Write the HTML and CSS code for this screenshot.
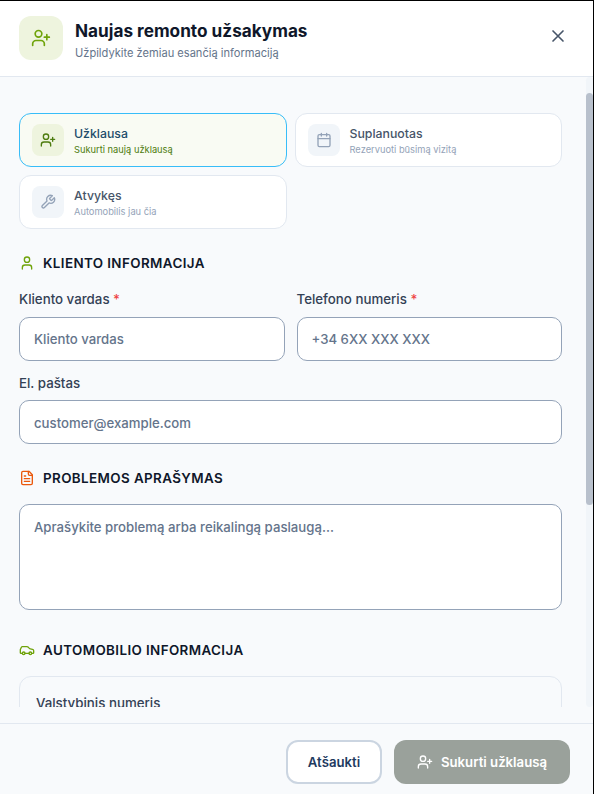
FILE: index.html
```html
<!DOCTYPE html>
<html lang="lt">
  <head>
    <meta charset="UTF-8" />
    <meta name="viewport" content="width=device-width, initial-scale=1.0" />
    <title>Naujas remonto užsakymas</title>
    <link rel="stylesheet" href="styles.css">
  </head>
  <body>
    <div class="modal">
      <header class="modal-header">
        <div class="header-icon">
          <svg width="20" height="20" viewBox="0 0 24 24"><path d="M16 21v-2a4 4 0 0 0-4-4H6a4 4 0 0 0-4 4v2"/><circle cx="9" cy="7" r="4"/><path d="M19 8v6M22 11h-6"/></svg>
        </div>
        <div class="header-text">
          <h1>Naujas remonto užsakymas</h1>
          <p>Užpildykite žemiau esančią informaciją</p>
        </div>
        <svg class="close" width="20" height="20" viewBox="0 0 24 24"><path d="M18 6 6 18M6 6l12 12"/></svg>
      </header>

      <div class="scroll-wrap">
        <main class="modal-body">
          <div class="types">
            <div class="type-card active">
              <div class="type-icon">
                <svg width="16" height="16" viewBox="0 0 24 24"><path d="M16 21v-2a4 4 0 0 0-4-4H6a4 4 0 0 0-4 4v2"/><circle cx="9" cy="7" r="4"/><path d="M19 8v6M22 11h-6"/></svg>
              </div>
              <div>
                <div class="type-title">Užklausa</div>
                <div class="type-sub">Sukurti naują užklausą</div>
              </div>
            </div>
            <div class="type-card">
              <div class="type-icon">
                <svg width="16" height="16" viewBox="0 0 24 24"><path d="M8 2v4M16 2v4"/><rect x="3" y="4" width="18" height="18" rx="2"/><path d="M3 10h18"/></svg>
              </div>
              <div>
                <div class="type-title">Suplanuotas</div>
                <div class="type-sub">Rezervuoti būsimą vizitą</div>
              </div>
            </div>
            <div class="type-card">
              <div class="type-icon">
                <svg width="16" height="16" viewBox="0 0 24 24"><path d="M14.7 6.3a1 1 0 0 0 0 1.4l1.6 1.6a1 1 0 0 0 1.4 0l3.77-3.77a6 6 0 0 1-7.94 7.94l-6.91 6.91a2.12 2.12 0 0 1-3-3l6.91-6.91a6 6 0 0 1 7.94-7.94l-3.76 3.76z"/></svg>
              </div>
              <div>
                <div class="type-title">Atvykęs</div>
                <div class="type-sub">Automobilis jau čia</div>
              </div>
            </div>
          </div>

          <section class="section">
            <h2 class="section-title">
              <svg class="green" width="16" height="16" viewBox="0 0 24 24"><path d="M19 21v-2a4 4 0 0 0-4-4H9a4 4 0 0 0-4 4v2"/><circle cx="12" cy="7" r="4"/></svg>
              KLIENTO INFORMACIJA
            </h2>
            <div class="field-row">
              <div class="field">
                <label>Kliento vardas <span class="req">*</span></label>
                <div class="input">Kliento vardas</div>
              </div>
              <div class="field">
                <label>Telefono numeris <span class="req">*</span></label>
                <div class="input">+34 6XX XXX XXX</div>
              </div>
            </div>
            <div class="field">
              <label>El. paštas</label>
              <div class="input input-mail">customer@example.com</div>
            </div>
          </section>

          <section class="section">
            <h2 class="section-title">
              <svg class="orange" width="16" height="16" viewBox="0 0 24 24"><path d="M15 2H6a2 2 0 0 0-2 2v16a2 2 0 0 0 2 2h12a2 2 0 0 0 2-2V7z"/><path d="M14 2v4a2 2 0 0 0 2 2h4M16 13H8M16 17H8M10 9H8"/></svg>
              PROBLEMOS APRAŠYMAS
            </h2>
            <div class="input textarea">Aprašykite problemą arba reikalingą paslaugą...</div>
          </section>

          <section class="section section-car">
            <h2 class="section-title">
              <svg class="green" width="16" height="16" viewBox="0 0 24 24"><path d="M19 17h2c.6 0 1-.4 1-1v-3c0-.9-.7-1.700-1.500-1.900C18.700 10.600 16 10 16 10s-1.300-1.400-2.200-2.300c-.5-.4-1.100-.7-1.800-.7H5c-.6 0-1.100.4-1.400.9l-1.400 2.900A3.700 3.700 0 0 0 2 12v4c0 .6.4 1 1 1h2"/><circle cx="7" cy="17" r="2"/><path d="M9 17h6"/><circle cx="17" cy="17" r="2"/></svg>
              AUTOMOBILIO INFORMACIJA
            </h2>
            <div class="car-card">
              <label>Valstybinis numeris</label>
            </div>
          </section>
        </main>
        <div class="scroll-track"><div class="scroll-thumb"></div></div>
      </div>

      <footer class="modal-footer">
        <button class="btn-cancel">Atšaukti</button>
        <button class="btn-submit">
          <svg width="16" height="16" viewBox="0 0 24 24"><path d="M16 21v-2a4 4 0 0 0-4-4H6a4 4 0 0 0-4 4v2"/><circle cx="9" cy="7" r="4"/><path d="M19 8v6M22 11h-6"/></svg>
          Sukurti užklausą
        </button>
      </footer>
    </div>
  </body>
</html>
```

FILE: styles.css
```css
* {
  box-sizing: border-box;
}
html,
body {
  height: 100%;
}
body {
  margin: 0;
  font-family: Inter, sans-serif;
  color: #0f172a;
  background: #000;
  overflow: hidden;
}
svg {
  fill: none;
  stroke: currentColor;
  stroke-width: 2;
  stroke-linecap: round;
  stroke-linejoin: round;
  flex-shrink: 0;
}
.modal {
  display: flex;
  flex-direction: column;
  height: 793px;
  margin: 1px 1px 0 0;
  background: #f8fafc;
}
.modal-header {
  display: flex;
  align-items: center;
  gap: 12px;
  height: 76px;
  padding: 0 25px 2px 19px;
  background: #fff;
  border-bottom: 1px solid #e2e8f0;
  flex-shrink: 0;
}
.header-icon {
  display: flex;
  align-items: center;
  justify-content: center;
  width: 44px;
  height: 44px;
  border-radius: 12px;
  background: #eef4de;
  color: #6fa30a;
}
.header-text {
  flex: 1;
  padding-top: 4px;
}
.header-text h1 {
  margin: 0;
  font-size: 17.2px;
  line-height: 24px;
  font-weight: 700;
  color: #0f172a;
}
.header-text p {
  margin: 2px 0 0;
  font-size: 11.1px;
  line-height: 16px;
  color: #64748b;
}
.close {
  color: #475569;
  margin-bottom: 4px;
}
.scroll-wrap {
  position: relative;
  height: 630px;
  overflow: hidden;
  flex-shrink: 0;
}
.modal-body {
  padding: 36px 31px 0 19px;
}
.types {
  display: grid;
  grid-template-columns: 1fr 1fr;
  gap: 8px;
}
.type-card {
  display: flex;
  align-items: center;
  gap: 10px;
  height: 54px;
  padding: 0 12px;
  background: #fff;
  border: 1px solid #e2e8f0;
  border-radius: 12px;
}
.type-card.active {
  background: #f9fbf3;
  border-color: #38bdf8;
}
.type-icon {
  display: flex;
  align-items: center;
  justify-content: center;
  width: 32px;
  height: 32px;
  border-radius: 8px;
  background: #f1f5f9;
  color: #94a3b8;
}
.active .type-icon {
  background: #eef4de;
  color: #4d7c0f;
}
.type-title {
  margin-top: 2px;
  font-size: 12.3px;
  line-height: 18px;
  font-weight: 500;
  color: #475569;
}
.type-sub {
  font-size: 9.3px;
  line-height: 14px;
  color: #94a3b8;
}
.active .type-title {
  color: #1e4d6b;
}
.active .type-sub {
  color: #4d7c0f;
}
.section {
  margin-top: 24px;
}
.section-car {
  margin-top: 30px;
}
.section-title {
  display: flex;
  align-items: center;
  gap: 8px;
  margin: 0 0 16px;
  font-size: 13.4px;
  line-height: 20px;
  font-weight: 600;
  letter-spacing: 0.4px;
  color: #0f172a;
}
.green {
  color: #6fa30a;
}
.orange {
  color: #ea580c;
}
.field-row {
  display: grid;
  grid-template-columns: 1fr 1fr;
  gap: 12px;
  margin-bottom: 12px;
}
label {
  display: block;
  margin-bottom: 8px;
  font-size: 13.3px;
  line-height: 20px;
  font-weight: 500;
  color: #334155;
}
.field-row + .field label {
  margin-bottom: 7px;
}
.req {
  color: #ef4444;
}
.input {
  height: 44px;
  padding: 0 14px;
  background: #fff;
  border: 1px solid #94a3b8;
  border-radius: 10px;
  font-size: 13.2px;
  font-weight: 500;
  line-height: 42px;
  color: #64748b;
}
.input-mail {
  line-height: 44px;
}
.textarea {
  height: 106px;
  padding-top: 2px;
  line-height: 40px;
}
.car-card {
  height: 120px;
  padding: 16px;
  border: 1px solid #e2e8f0;
  border-radius: 12px;
}
.scroll-track {
  position: absolute;
  top: 0;
  bottom: 0;
  right: 0;
  width: 7px;
  background: #f1f5f9;
  border-radius: 4px;
}
.scroll-thumb {
  margin-top: 16px;
  height: 412px;
  border-radius: 4px;
  background: #b8c0cc;
}
.modal-footer {
  display: flex;
  justify-content: flex-end;
  gap: 12px;
  height: 71px;
  margin-top: 16px;
  padding: 16px 23px 0 0;
  border-top: 1px solid #e2e8f0;
}
button {
  font-family: inherit;
  font-size: 13.2px;
  font-weight: 600;
  height: 44px;
  border-radius: 12px;
}
.btn-cancel {
  width: 96px;
  background: #fff;
  border: 2px solid #cbd5e1;
  color: #1e3a5f;
}
.btn-submit {
  display: flex;
  align-items: center;
  justify-content: center;
  gap: 8px;
  width: 176px;
  background: #9aa19b;
  border: 0;
  color: #fff;
}
```
